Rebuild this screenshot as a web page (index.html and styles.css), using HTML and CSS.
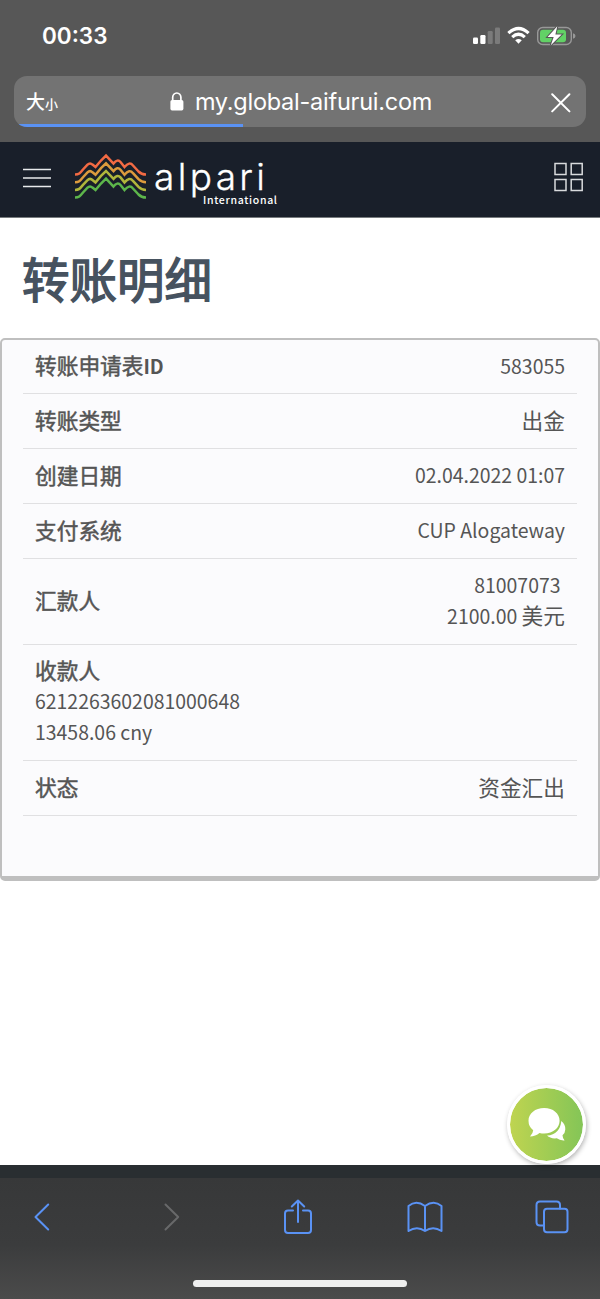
FILE: index.html
```
<!DOCTYPE html>
<html lang="zh-CN">
<head>
<meta charset="utf-8">
<title>转账明细</title>
<link rel="stylesheet" href="styles.css">
</head>
<body>
<div class="phone">
  <header class="browser-top">
    <div class="status">
      <span class="time">00:33</span>
      <svg class="status-icons" width="104" height="24" viewBox="0 0 104 24">
        <g fill="#fff"><rect x="1" y="13.5" width="5" height="6.5" rx="1.2"/><rect x="8.3" y="11" width="5.2" height="9" rx="1.2"/></g>
        <g fill="#7b7b7b"><rect x="15.700" y="7" width="5" height="13" rx="1.2"/><rect x="23" y="3.500" width="5" height="16.500" rx="1.2"/></g>
        <g fill="none" stroke="#fff" stroke-width="3.2"><path d="M36.400 9.200Q46.500-.200 56.600 9.200"/><path d="M40.200 13.100Q46.500 7.400 52.800 13.100"/></g>
        <path fill="#fff" d="M43.200 16.200Q46.500 13.600 49.800 16.200L46.500 19.800Z"/>
        <rect x="65.700" y="3.500" width="33.600" height="17" rx="5" fill="none" stroke="#989898" stroke-width="1.4"/>
        <rect x="68" y="5.700" width="26" height="12.600" rx="3" fill="#62d166"/>
        <path fill="#989898" d="M101 9.300Q103.500 10 103.500 12T101 14.700Z"/>
        <path d="M85.300 2.300L75.600 12.900H81.700L78.800 21.200L89.700 10.400H83.400Z" fill="#fff" stroke="#575757" stroke-width="2" paint-order="stroke"/>
      </svg>
    </div>
    <div class="address">
      <span class="size">大<small>小</small></span>
      <span class="url"><svg width="14" height="20" viewBox="0 0 14 20"><path d="M2.700 9V5.300a4.100 4.300 0 0 1 8.200 0V9" fill="none" stroke="#fff" stroke-width="1.700"/><rect x=".4" y="8" width="13" height="10.500" rx="1.700" fill="#fff"/></svg><span class="domain">my.global-aifurui.com</span></span>
      <svg width="20" height="20" viewBox="0 0 20 20"><path d="M1.200 1.200L18.400 18.400M18.400 1.200L1.200 18.400" stroke="#fff" stroke-width="2" stroke-linecap="round"/></svg>
      <span class="progress"></span>
    </div>
  </header>

  <nav class="site-nav">
    <svg class="menu" width="28" height="21" viewBox="0 0 28 21"><path d="M0 1.500H28M0 10H28M0 18.500H28" stroke="#e8eaec" stroke-width="1.700"/></svg>
    <svg class="logo" width="206" height="60" viewBox="0 0 206 60">
      <defs><path id="ridge" d="M1 24.500C5 24.500 5.800 23.500 9 19.500L13.500 14.700Q16 12.300 18.500 14.600L21.500 17L27 10.500L32 5.600L39.500 13.500Q43.500 8.500 46.500 12L50.500 17Q55.500 11 59 15.500L64.500 21.500Q67.500 24.500 72 24.500" fill="none" stroke-width="2.500"/></defs>
      <use href="#ridge" stroke="#f26a43"/><use href="#ridge" y="7.700" stroke="#dc9b3d"/><use href="#ridge" y="15.400" stroke="#b0b63b"/><use href="#ridge" y="23" stroke="#5db64b"/>
      <text class="wordmark" x="80" y="40.300" textLength="111" lengthAdjust="spacing">alpari</text>
      <text class="subword" x="129" y="53.800" textLength="74" lengthAdjust="spacing">International</text>
    </svg>
    <svg class="apps" width="30" height="30" viewBox="0 0 30 30"><path d="M1 1.500H12V12.500H1ZM17.200 1.500H28.200V12.500H17.200ZM1 17.500H12V28.500H1ZM17.200 17.500H28.200V28.500H17.200Z" fill="none" stroke="#d9dbdd" stroke-width="1.500"/></svg>
  </nav>

  <main>
    <h1>转账明细</h1>
    <section class="card">
      <dl>
        <div class="row"><dt>转账申请表<span class="latin">ID</span></dt><dd><span class="latin">583055</span></dd></div>
        <div class="row"><dt>转账类型</dt><dd>出金</dd></div>
        <div class="row"><dt>创建日期</dt><dd><span class="latin">02.04.2022 01:07</span></dd></div>
        <div class="row"><dt>支付系统</dt><dd><span class="latin">CUP Alogateway</span></dd></div>
        <div class="row sender"><dt>汇款人</dt><dd><span class="latin account">81007073</span><br><span class="latin">2100.00 </span>美元</dd></div>
        <div class="row receiver"><dt>收款人</dt><dd><span class="latin">6212263602081000648</span><br><span class="latin">13458.06 cny</span></dd></div>
        <div class="row"><dt>状态</dt><dd>资金汇出</dd></div>
      </dl>
    </section>
    <button class="chat" aria-label="chat">
      <svg width="40" height="36" viewBox="0 0 40 36"><path d="M34.300 14Q38.500 17 38.300 22.500Q38.200 26 35.500 28.300Q35.500 31 37.600 33.400Q33 33.800 29.800 31.300Q23.500 32 20 28.600Q33 27.500 34.300 14Z" fill="#fff"/><path d="M17.200 1C26 1 32.600 6.500 32.600 13.700S26 26.400 17.200 26.400Q14.800 26.400 12.500 25.900Q8.500 29.300 3 29.500Q6 26.500 6.200 23.300Q1.500 19.500 1.500 13.700C1.500 6.500 8.200 1 17.200 1Z" fill="#fff"/></svg>
    </button>
  </main>

  <footer class="browser-bottom">
    <div class="tools">
      <svg width="16" height="28" viewBox="0 0 16 28"><path d="M14.200 1.500L1.500 14L14.200 26.500" class="line"/></svg>
      <svg class="off" width="16" height="28" viewBox="0 0 16 28"><path d="M1.500 1.500L14.200 14L1.500 26.500" class="line"/></svg>
      <svg width="28" height="36" viewBox="0 0 28 36"><path class="line" d="M9 11.500H4Q1 11.500 1 14.500V31Q1 34 4 34H24Q27 34 27 31V14.500Q27 11.500 24 11.500H19M14 23V2M7.800 7.500L14 1.500L20.200 7.500"/></svg>
      <svg width="36" height="32" viewBox="0 0 36 32"><path class="line" d="M18 5V30Q10 24.500 1.500 30V5Q9-1.500 18 5Q27-1.500 34.500 5V30Q26 24.500 18 30"/></svg>
      <svg width="34" height="34" viewBox="0 0 34 34"><path class="line" d="M8.500 25.500H5Q1.500 25.500 1.500 22V5Q1.500 1.500 5 1.500H21.500Q25 1.500 25 5V8.500"/><rect class="line" x="9" y="8.800" width="23.500" height="23.500" rx="3"/></svg>
    </div>
    <div class="home"></div>
  </footer>
</div>
</body>
</html>
```
FILE: styles.css
```
* { box-sizing: border-box; }
body { margin: 0; background: #fff; color: #555; font-family: "Noto Sans CJK SC", sans-serif; }
svg { display: block; flex: none; }
.phone { width: 600px; height: 1299px; display: flex; flex-direction: column; overflow: hidden; }

.browser-top { height: 142px; background: #575757; color: #fff; padding: 0 14px; flex: none; }
.status { height: 76px; display: flex; justify-content: space-between; align-items: flex-start; padding: 24px 10px 0 28px; }
.time { font: 600 22.5px/24px Inter, sans-serif; letter-spacing: 0; }
.address { position: relative; height: 51px; border-radius: 13px; background: #737373; overflow: hidden; display: flex; align-items: center; justify-content: space-between; padding: 3px 15px 0 12px; }
.size { font-size: 19px; line-height: 30px; font-weight: 500; width: 80px; padding-bottom: 2px; }
.size small { font-size: 13px; }
.url { display: flex; align-items: center; gap: 11px; margin-right: 55px; padding-bottom: 2px; }
.domain { font: 400 23.5px/32px Inter, sans-serif; letter-spacing: -.25px; }
.progress { position: absolute; left: 0; bottom: 0; width: 229px; height: 3px; background: #5a92f4; }

.site-nav { height: 76px; background: #191f2a; border-bottom: 1px solid #777b7e; flex: none; display: flex; align-items: flex-start; padding: 0 16px 0 23px; }
.menu { margin-top: 26px; }
.logo { margin: 8px 0 0 23px; }
.apps { margin: 20px 0 0 auto; }
.wordmark { font: 300 37px Inter, sans-serif; fill: #fff; stroke: #fff; stroke-width: .3px; }
.subword { font: 500 10.5px "Noto Sans CJK SC", sans-serif; fill: #fff; }

main { position: relative; flex: 1; }
h1 { margin: 0; padding: 24px 22px 0; height: 120px; font-size: 47.5px; line-height: 72px; font-weight: 400; -webkit-text-stroke: 1.4px #46525f; color: #46525f; }
.card { height: 543px; border: 2px solid #bfbfbf; border-bottom-width: 5px; border-radius: 5px; background: #fbfbfd; padding: 0 21px; }
dl, dd { margin: 0; }
.row { height: 55px; border-bottom: 1px solid #e0e0e2; padding: 0 12px 3px; display: flex; justify-content: space-between; align-items: center; font-size: 21.7px; line-height: 30px; }
.row:first-child { height: 54px; }
dt { -webkit-text-stroke: .5px #555; }
dt .latin { font-weight: 700; -webkit-text-stroke: 0; }
dd { text-align: right; }
.latin { font-size: 19.45px; }
.sender { height: 86px; }
.account { margin-right: 4.5px; }
.receiver { height: 116px; flex-direction: column; align-items: flex-start; justify-content: center; }
.receiver dd { text-align: left; }
.chat { position: absolute; right: 14px; bottom: 1px; width: 79px; height: 79px; border: 3px solid #fff; border-radius: 50%; padding: 0; display: flex; align-items: center; justify-content: center; background: linear-gradient(90deg, #bfd450, #84c557) padding-box; box-shadow: 1px 2px 5px rgba(0,0,0,.3); }

.browser-bottom { height: 134px; flex: none; border-top: 13px solid #292e31; background: linear-gradient(#373839, #3b3c3d 55%, #4b4b4b); }
.tools { display: grid; grid-template-columns: 129.5px 120px 123.500px 127.500px 34px; align-items: center; height: 78px; padding: 0 31px 0 34px; }
.line { fill: none; stroke: #5a92f4; stroke-width: 2; stroke-linecap: round; stroke-linejoin: round; }
.off .line { stroke: #68696a; }
.home { width: 214px; height: 7px; margin: 24px auto 0; border-radius: 4px; background: #efefef; }
```
